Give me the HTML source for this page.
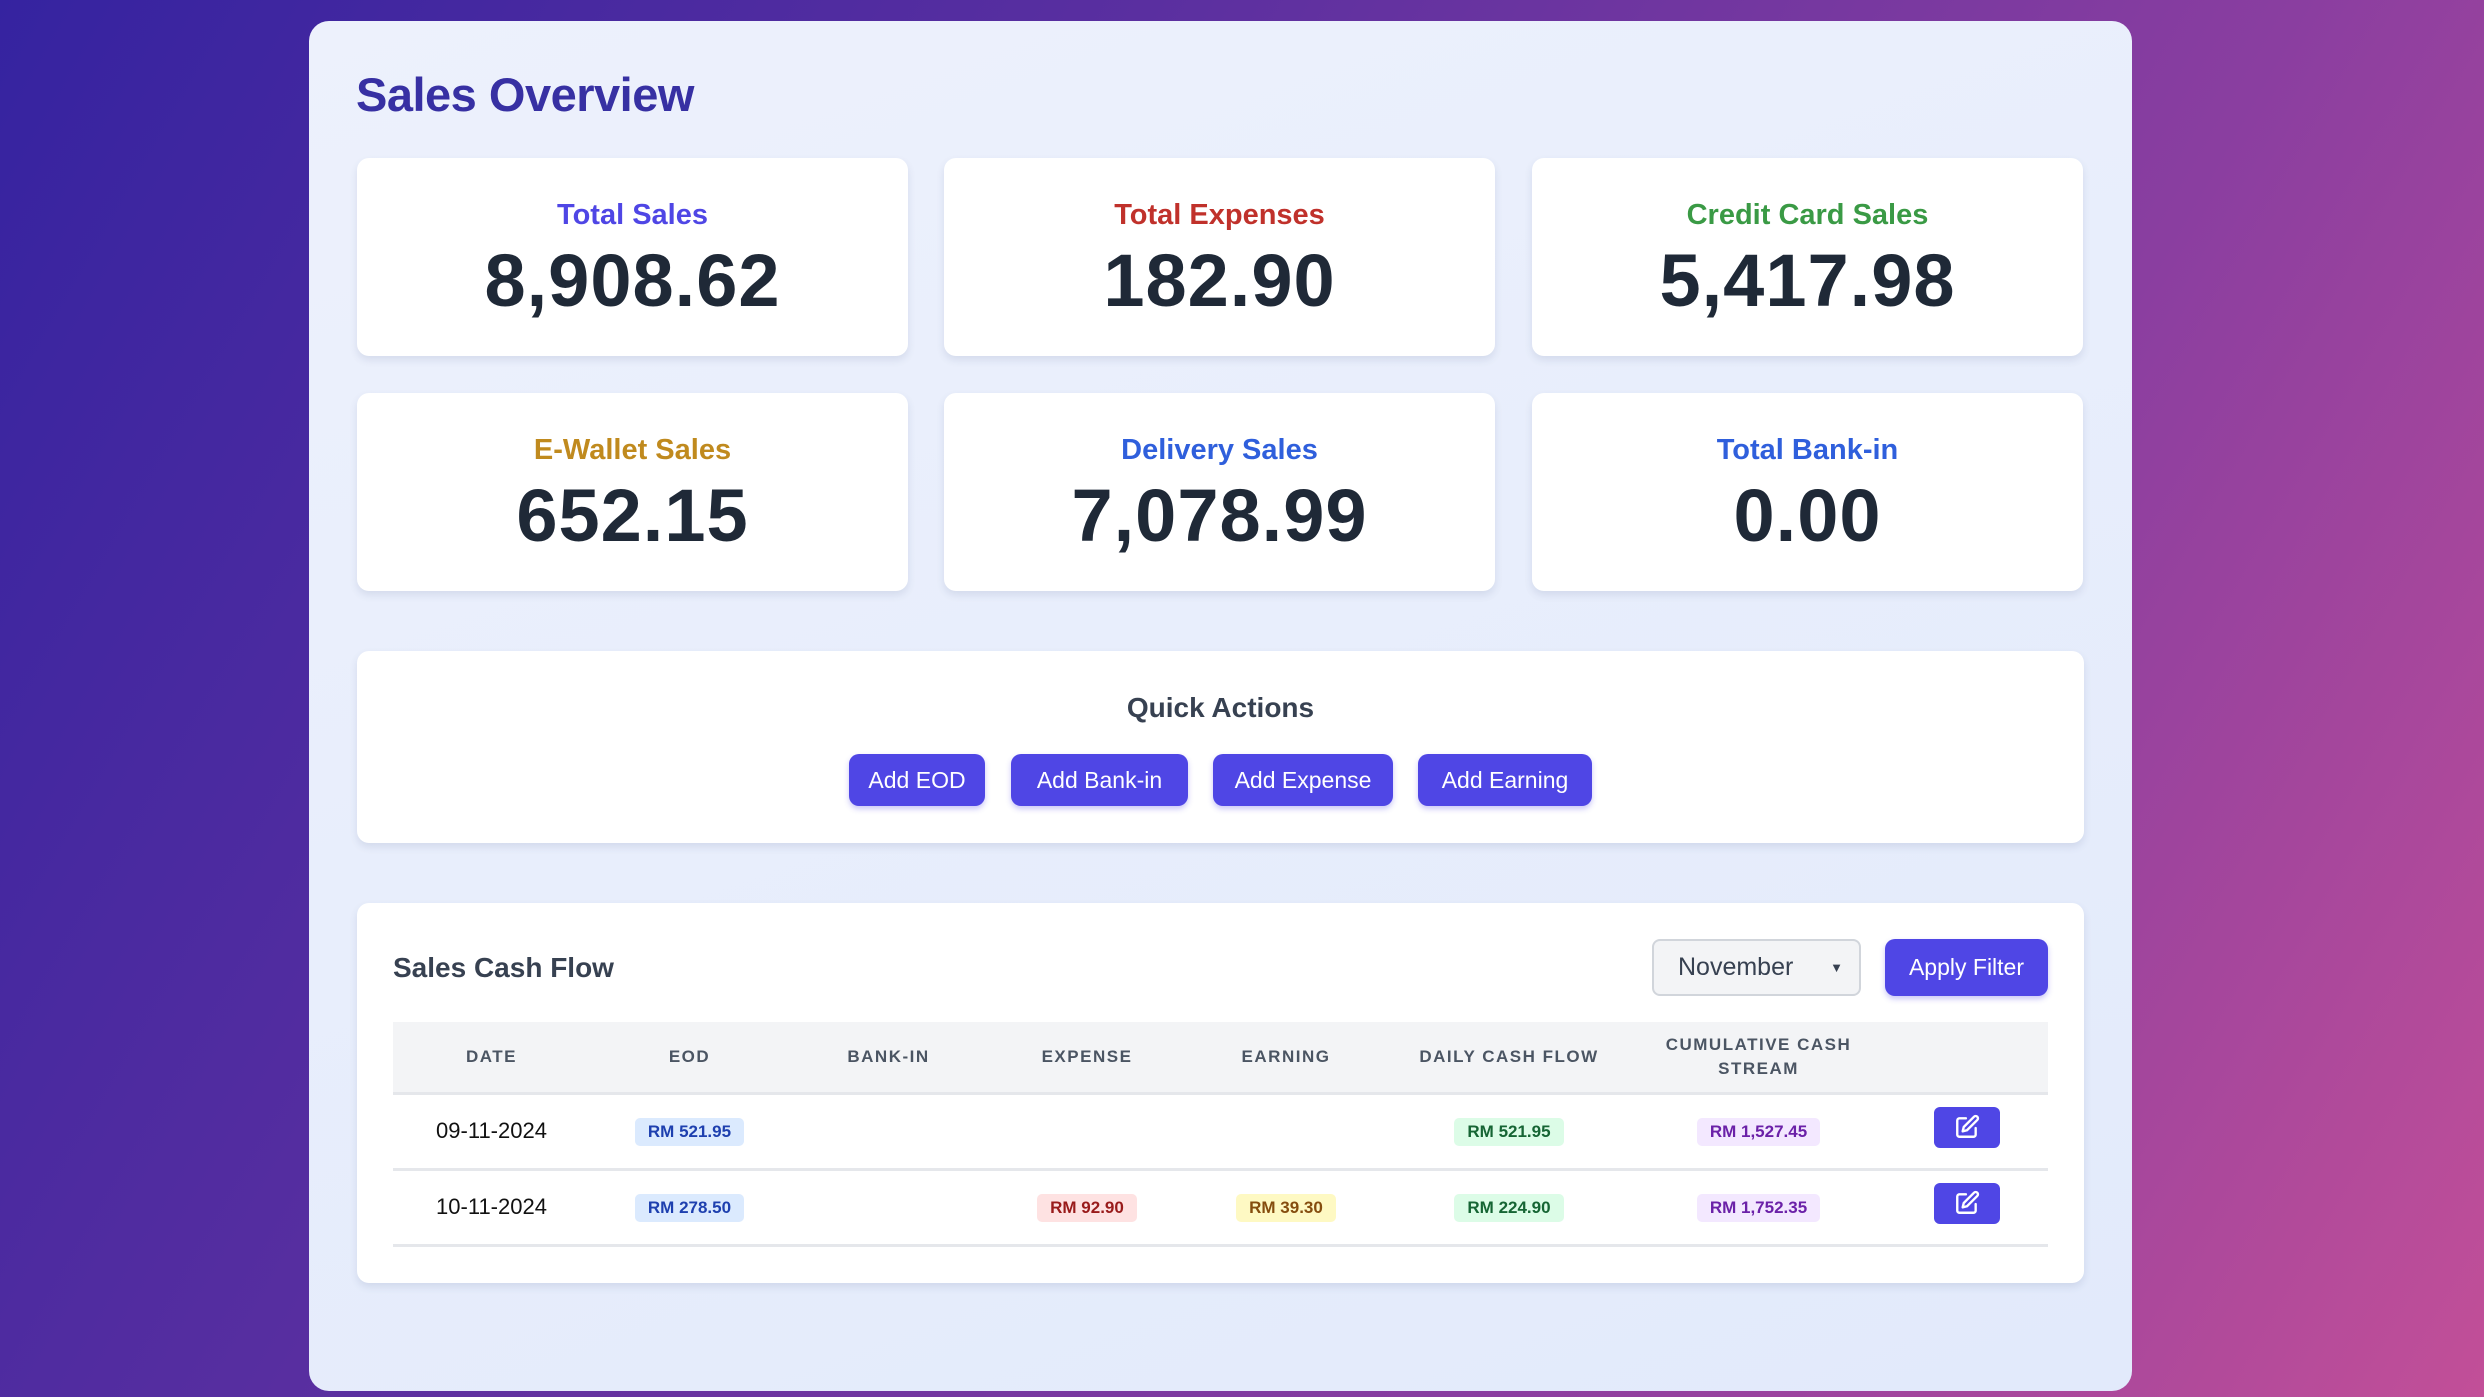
<!DOCTYPE html>
<html><head><meta charset="utf-8"><style>
*{box-sizing:border-box;margin:0;padding:0}
body{width:2484px;height:1397px;overflow:hidden;font-family:"Liberation Sans",sans-serif;background:linear-gradient(120deg,#3523a0 0%,#5a2fa0 35%,#8a3ea0 70%,#c24f98 100%);position:relative}
.wrap{position:absolute;left:309px;top:21px;width:1823px;height:1370px;border-radius:20px;background:linear-gradient(160deg,#edf1fc,#e2eafb)}
.abs{position:absolute}
h1{position:absolute;left:47px;top:46px;font-size:47px;font-weight:700;color:#3730a3;letter-spacing:-0.5px}
.card{position:absolute;width:551px;height:198px;background:#fff;border-radius:12px;box-shadow:0 4px 8px rgba(60,70,120,.12);text-align:center}
.card .l{position:absolute;left:0;right:0;top:41px;font-size:29px;font-weight:700}
.card .v{position:absolute;left:0;right:0;top:80px;font-size:74px;font-weight:800;color:#1f2937;letter-spacing:1px}
.panel{position:absolute;background:#fff;border-radius:12px;box-shadow:0 4px 8px rgba(60,70,120,.12)}
.btn{position:absolute;background:#4f46e5;color:#fff;border-radius:10px;font-size:23px;text-align:center;line-height:52px;height:52px;box-shadow:0 3px 6px rgba(79,70,229,.3)}
table{position:absolute;left:36px;top:119px;width:1655px;border-collapse:collapse;table-layout:fixed}
th{background:#f3f4f6;height:71px;font-size:17px;font-weight:700;color:#4b5563;letter-spacing:1.5px;border-bottom:3px solid #e5e7eb;line-height:24px}
td{height:76px;text-align:center;font-size:22px;color:#111;border-bottom:3px solid #e5e7eb}
.b{display:inline-block;font-size:17px;font-weight:700;padding:4px 13px;border-radius:5px}
.blue{background:#dbeafe;color:#1e40af}.green{background:#dcfce7;color:#166534}.purple{background:#f3e8ff;color:#6b21a8}.red{background:#fee2e2;color:#991b1b}.yellow{background:#fef9c3;color:#854d0e}
.ed{display:inline-block;width:66px;height:41px;background:#4f46e5;border-radius:6px;vertical-align:middle;margin-top:-8px;padding-top:7px}
</style></head><body>
<div class="wrap">
<h1>Sales Overview</h1>
<div class="card" style="left:48px;top:137px"><div class="l" style="color:#4f46e5">Total Sales</div><div class="v">8,908.62</div></div>
<div class="card" style="left:635px;top:137px"><div class="l" style="color:#c0312b">Total Expenses</div><div class="v">182.90</div></div>
<div class="card" style="left:1223px;top:137px"><div class="l" style="color:#3a9a45">Credit Card Sales</div><div class="v">5,417.98</div></div>
<div class="card" style="left:48px;top:372px"><div class="l" style="color:#c08a1e">E-Wallet Sales</div><div class="v">652.15</div></div>
<div class="card" style="left:635px;top:372px"><div class="l" style="color:#2f5fdc">Delivery Sales</div><div class="v">7,078.99</div></div>
<div class="card" style="left:1223px;top:372px"><div class="l" style="color:#2f5fdc">Total Bank-in</div><div class="v">0.00</div></div>
<div class="panel" style="left:48px;top:630px;width:1727px;height:192px">
<div class="abs" style="left:0;right:0;top:41px;text-align:center;font-size:28px;font-weight:700;color:#374151">Quick Actions</div>
<div class="btn" style="left:492px;top:103px;width:136px">Add EOD</div>
<div class="btn" style="left:654px;top:103px;width:177px">Add Bank-in</div>
<div class="btn" style="left:856px;top:103px;width:180px">Add Expense</div>
<div class="btn" style="left:1061px;top:103px;width:174px">Add Earning</div>
</div>
<div class="panel" style="left:48px;top:882px;width:1727px;height:380px">
<div class="abs" style="left:36px;top:49px;font-size:28px;font-weight:700;color:#374151">Sales Cash Flow</div>
<div class="abs" style="left:1295px;top:36px;width:209px;height:57px;background:#f3f4f6;border:2px solid #d1d5db;border-radius:8px;font-size:25px;color:#374151;line-height:53px;padding-left:24px">November<span style="position:absolute;right:16px;top:0;font-size:13px">▼</span></div>
<div class="btn" style="left:1528px;top:36px;width:163px;height:57px;line-height:57px">Apply Filter</div>
<table>
<colgroup><col style="width:197px"><col style="width:199px"><col style="width:199px"><col style="width:198px"><col style="width:200px"><col style="width:246px"><col style="width:253px"><col style="width:163px"></colgroup>
<tr><th>DATE</th><th>EOD</th><th>BANK-IN</th><th>EXPENSE</th><th>EARNING</th><th>DAILY CASH FLOW</th><th>CUMULATIVE CASH<br>STREAM</th><th></th></tr>
<tr><td>09-11-2024</td><td><span class="b blue">RM 521.95</span></td><td></td><td></td><td></td><td><span class="b green">RM 521.95</span></td><td><span class="b purple">RM 1,527.45</span></td><td><span class="ed"><svg width="26" height="26" viewBox="0 0 24 24" fill="none" stroke="#fff" stroke-width="2.2" stroke-linecap="round" stroke-linejoin="round"><path d="M11 4H5a2 2 0 0 0-2 2v13a2 2 0 0 0 2 2h13a2 2 0 0 0 2-2v-6"/><path d="M18.5 2.5a2.1 2.1 0 0 1 3 3L12 15l-4 1 1-4 9.5-9.5z"/></svg></span></td></tr>
<tr><td>10-11-2024</td><td><span class="b blue">RM 278.50</span></td><td></td><td><span class="b red">RM 92.90</span></td><td><span class="b yellow">RM 39.30</span></td><td><span class="b green">RM 224.90</span></td><td><span class="b purple">RM 1,752.35</span></td><td><span class="ed"><svg width="26" height="26" viewBox="0 0 24 24" fill="none" stroke="#fff" stroke-width="2.2" stroke-linecap="round" stroke-linejoin="round"><path d="M11 4H5a2 2 0 0 0-2 2v13a2 2 0 0 0 2 2h13a2 2 0 0 0 2-2v-6"/><path d="M18.5 2.5a2.1 2.1 0 0 1 3 3L12 15l-4 1 1-4 9.5-9.5z"/></svg></span></td></tr>
</table>
</div>
</div>
</body></html>
